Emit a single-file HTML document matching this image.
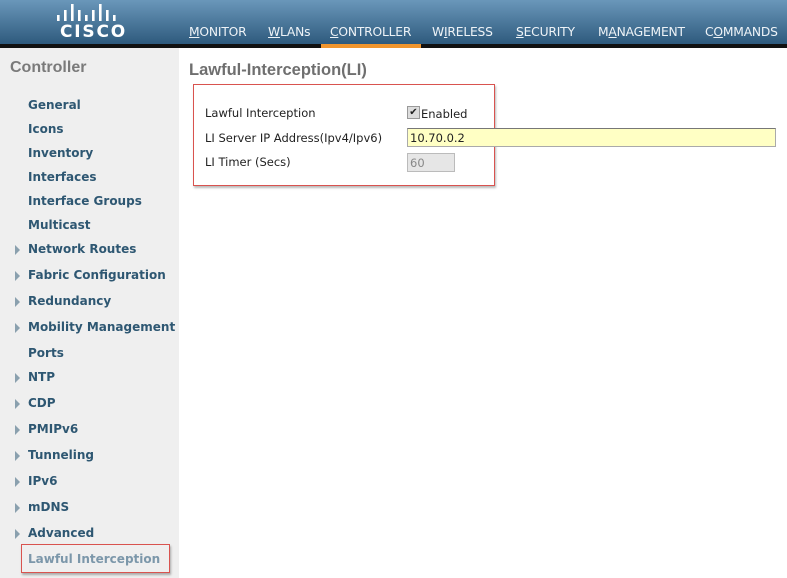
<!DOCTYPE html>
<html><head><style>
body{margin:0;width:787px;height:578px;overflow:hidden;background:#fff;font-family:"DejaVu Sans",Verdana,sans-serif;position:relative}
.hdr{position:absolute;left:0;top:0;width:787px;height:44px;background:linear-gradient(#6a97ba,#2e5a7d)}
.blk{position:absolute;left:0;top:44px;width:787px;height:4px;background:#111}
.or{position:absolute;left:321px;top:44px;width:100px;height:4px;background:#f0952e}
.nav{position:absolute;top:25px;color:#eef3f7;font-size:12.3px;letter-spacing:-0.2px}
.nav u{text-decoration:underline}
.side{position:absolute;left:0;top:48px;width:179px;height:530px;background:#efefef}
.st{position:absolute;left:10px;top:59px;font-family:"Liberation Sans",Arial,sans-serif;font-weight:bold;font-size:16px;color:#7a7a7a}
.it{position:absolute;left:28px;font-weight:bold;font-size:12px;color:#2e5772;white-space:nowrap;margin-top:2px}
.ar{position:absolute;left:15px;width:0;height:0;border-left:5px solid #8aa0ae;border-top:5px solid transparent;border-bottom:5px solid transparent;margin-top:1px}
.t{position:absolute;left:189px;top:61px;font-family:"Liberation Sans",Arial,sans-serif;font-weight:bold;font-size:16.5px;color:#6f6f6f}
.box{position:absolute;left:193px;top:84px;width:300px;height:100px;border:1.5px solid #d9534f;box-shadow:1px 2px 2px #bbb}
.lb{position:absolute;left:205px;font-size:11.5px;color:#222}
</style></head><body>
<div class="hdr"></div><div class="blk"></div><div class="or"></div>
<svg style="position:absolute;left:55px;top:2px" width="70" height="22">
<g fill="#fff"><rect x="2" y="13" width="2.6" height="6"/><rect x="9" y="8" width="2.6" height="11"/><rect x="16" y="2" width="2.6" height="17"/><rect x="23" y="8" width="2.6" height="11"/><rect x="30" y="13" width="2.6" height="6"/><rect x="37" y="8" width="2.6" height="11"/><rect x="44" y="2" width="2.6" height="17"/><rect x="51" y="8" width="2.6" height="11"/><rect x="58" y="13" width="2.6" height="6"/></g></svg>
<div style="position:absolute;left:60px;top:22px;color:#fff;font-weight:bold;font-size:17px;letter-spacing:1.8px">CISCO</div>
<div class="nav" style="left:189px"><u>M</u>ONITOR</div>
<div class="nav" style="left:268px"><u>W</u>LANs</div>
<div class="nav" style="left:330px"><u>C</u>ONTROLLER</div>
<div class="nav" style="left:432px">W<u>I</u>RELESS</div>
<div class="nav" style="left:516px"><u>S</u>ECURITY</div>
<div class="nav" style="left:598px">M<u>A</u>NAGEMENT</div>
<div class="nav" style="left:705px">C<u>O</u>MMANDS</div>
<div class="side"></div>
<div class="st">Controller</div>
<div class="it" style="top:96px">General</div>
<div class="it" style="top:120px">Icons</div>
<div class="it" style="top:144px">Inventory</div>
<div class="it" style="top:168px">Interfaces</div>
<div class="it" style="top:192px">Interface Groups</div>
<div class="it" style="top:216px">Multicast</div>
<div class="ar" style="top:244px"></div><div class="it" style="top:240px">Network Routes</div>
<div class="ar" style="top:270px"></div><div class="it" style="top:266px">Fabric Configuration</div>
<div class="ar" style="top:296px"></div><div class="it" style="top:292px">Redundancy</div>
<div class="ar" style="top:322px"></div><div class="it" style="top:318px">Mobility Management</div>
<div class="it" style="top:344px">Ports</div>
<div class="ar" style="top:372px"></div><div class="it" style="top:368px">NTP</div>
<div class="ar" style="top:398px"></div><div class="it" style="top:394px">CDP</div>
<div class="ar" style="top:424px"></div><div class="it" style="top:420px">PMIPv6</div>
<div class="ar" style="top:450px"></div><div class="it" style="top:446px">Tunneling</div>
<div class="ar" style="top:476px"></div><div class="it" style="top:472px">IPv6</div>
<div class="ar" style="top:502px"></div><div class="it" style="top:498px">mDNS</div>
<div class="ar" style="top:528px"></div><div class="it" style="top:524px">Advanced</div>
<div style="position:absolute;left:21px;top:544px;width:147px;height:27px;border:1.5px solid #d9534f;box-shadow:1px 2px 2px #aaa"></div>
<div class="it" style="top:550px;color:#7c97aa">Lawful Interception</div>
<div class="t">Lawful-Interception(LI)</div>
<div class="box"></div>
<div class="lb" style="top:106px">Lawful Interception</div>
<div class="lb" style="top:131px">LI Server IP Address(Ipv4/Ipv6)</div>
<div class="lb" style="top:155px">LI Timer (Secs)</div>
<div style="position:absolute;left:407px;top:106px;width:11px;height:11px;background:#ddd;border:1px solid #999;font-size:10px;line-height:11px;text-align:center;color:#222">✔</div>
<div class="lb" style="left:421px;top:107px">Enabled</div>
<div style="position:absolute;left:407px;top:128px;width:367px;height:17px;background:#ffffc4;border:1px solid #aaa;border-top-color:#777"></div>
<div class="lb" style="left:410px;top:131px">10.70.0.2</div>
<div style="position:absolute;left:407px;top:153px;width:46px;height:17px;background:#e6e6e6;border:1px solid #bbb"></div>
<div class="lb" style="left:410px;top:156px;color:#888">60</div>
</body></html>
